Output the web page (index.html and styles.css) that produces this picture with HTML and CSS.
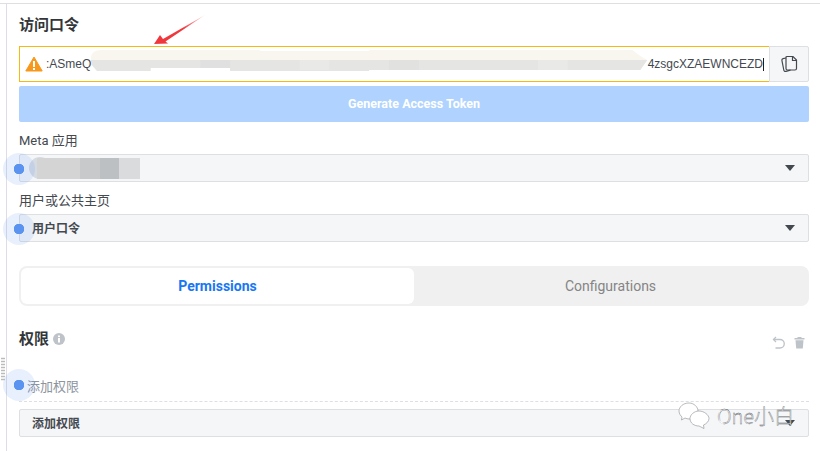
FILE: index.html
```html
<!DOCTYPE html>
<html lang="zh">
<head>
<meta charset="utf-8">
<title>访问口令</title>
<link rel="stylesheet" href="styles.css">
</head>
<body>
<div class="page">
  <div class="frame">
  <div class="panel">
    <h2 class="title">访问口令</h2>
    <div class="token">
      <div class="token-input">
        <svg class="warn" width="18" height="16" viewBox="0 0 18 16"><path d="M9 1 L17.200 15 H0.800 Z" fill="#f7981d" stroke="#f7981d" stroke-linejoin="round"/><rect x="8" y="5" width="2" height="6" fill="#fff"/><rect x="8" y="12" width="2" height="2" fill="#fff"/></svg>
        <span class="tok-start">:ASmeQ</span>
        <svg class="smear" width="560" height="21" viewBox="0 0 560 21" preserveAspectRatio="none">
          <path d="M0 6 Q2 0 10 0 H170 V1 H280 V0 H545 L553 6 L560 10 L553 20 H280 V20 H140 V18 H60 V21 H6 L0 14 Z" fill="#f9f6ef"/>
          <path d="M0 10 H560 L553 20 H280 V21 H140 V18 H60 V21 H6 L0 14 Z" fill="#e5e5e4"/>
          <rect x="110" y="10" width="30" height="8" fill="#e0e0e0"/>
          <rect x="210" y="10" width="30" height="10" fill="#e9e9e8"/>
          <rect x="300" y="10" width="30" height="10" fill="#e1e1e0"/>
          <rect x="450" y="10" width="30" height="10" fill="#e9e9e8"/>
        </svg>
        <span class="tok-end">4zsgcXZAEWNCEZD</span><span class="caret"></span>
      </div>
      <button class="copy"><svg width="18" height="18" viewBox="0 0 18 18" fill="none" stroke="#444950" stroke-width="1.2"><path d="M7 1.500 H13 L16.500 5 V13.500 Q16.500 15 15 15 H7.500 Q6 15 6 13.500 V2.500 Q6 1.500 7 1.500 Z"/><path d="M12.500 1.500 V5.500 H16.500"/><path d="M6 3 L3 3.600 Q1.600 4 1.900 5.400 L3.800 15 Q4.100 16.800 6 16.400 L10.500 15.200"/></svg></button>
    </div>
    <button class="generate">Generate Access Token</button>
    <label class="label">Meta 应用</label>
    <div class="select"><span class="avatar"></span><span class="blur"></span><span class="caret-down"></span></div>
    <label class="label">用户或公共主页</label>
    <div class="select"><span class="select-text">用户口令</span><span class="caret-down"></span></div>
    <div class="tabs">
      <div class="tab active">Permissions</div>
      <div class="tab">Configurations</div>
    </div>
    <div class="perm-head">
      <h2 class="title">权限</h2>
      <svg class="info" width="12" height="12" viewBox="0 0 12 12"><circle cx="6" cy="6" r="6" fill="#bec3c9"/><rect x="5" y="5" width="2" height="4.500" fill="#fff"/><rect x="5" y="2.500" width="2" height="1.600" fill="#fff"/></svg>
      <div class="actions">
        <svg width="13" height="13" viewBox="0 0 13 13" fill="none" stroke="#bec3c9" stroke-width="1.300"><path d="M1.500 3.500 H8 A4 4 0 0 1 8 12 H3.500"/><path d="M4 1 L1.500 3.500 L4 6"/></svg>
        <svg width="11" height="13" viewBox="0 0 11 13"><path d="M0.500 2 H3.500 V1 H7.500 V2 H10.500 V3.400 H0.500 Z M1.500 4.200 H9.500 L8.800 12.600 H2.200 Z" fill="#bec3c9"/></svg>
      </div>
    </div>
    <div class="add-input">添加权限</div>
    <div class="select add-select"><span class="select-text">添加权限</span><span class="caret-down"></span></div>
  </div>
  </div>
  <i class="hot hot-1"></i>
  <i class="hot hot-2"></i>
  <i class="hot hot-3"></i>
  <svg class="arrow" width="54" height="32" viewBox="0 0 54 32"><defs><linearGradient id="a" x1="0" y1="1" x2="1" y2="0"><stop offset="0" stop-color="#f0383c"/><stop offset=".55" stop-color="#f0383c"/><stop offset="1" stop-color="#f0383c" stop-opacity="0.150"/></linearGradient></defs><path d="M0 30 L6 21 L9 25 L51 1 L11.500 27.500 L14 29.500 Z" fill="url(#a)"/></svg>
  <div class="watermark">
    <svg width="32" height="27" viewBox="0 0 32 27" fill="#fff" stroke="#8a8d91" stroke-width=".6"><path d="M11 1 C5 1 1 5 1 9 C1 12 3 14 4 15 L3.500 18 L7 16 C8 16.500 10 17 11 17 C18 17 20 12 20 9 C20 5 16 1 11 1 Z"/><path d="M21 9 C16 9 12 13 12 16.500 C12 21 16 24 21 24 L26 26.500 L25.500 23 C28 22 31 19.500 31 16.500 C31 13 26 9 21 9 Z"/></svg>
    <span>One小白</span>
  </div>
  <div class="grip"></div>
</div>
</body>
</html>
```
FILE: styles.css
```css
* { box-sizing: border-box; }
html, body { margin: 0; padding: 0; background: #fff; }
body { font-family: Roboto, "Liberation Sans", "Noto Sans CJK SC", sans-serif; color: #444950; overflow: hidden; }
.page { position: relative; width: 820px; height: 451px; overflow: hidden; padding-top: 3px; }
.frame { height: 448px; border-top: 1px solid #dddfe2; padding-left: 6px; }
.panel { height: 447px; border-left: 1px solid #dcdde6; padding: 11px 11px 0 12px; }
.title { margin: 0; font-size: 15px; line-height: 18px; font-weight: 700; color: #333639; font-family: "Noto Sans CJK SC", sans-serif; }
.token { display: flex; height: 36px; margin-top: 13px; }
.token-input { flex: 1; min-width: 0; display: flex; align-items: center; border: 1px solid #f5b90f; border-right: 0; padding-left: 5px; font: 12px "Liberation Sans", sans-serif; color: #444950; overflow: hidden; }
.warn { flex: none; margin-right: 3px; }
.tok-start { flex: none; }
.smear { flex: 1; min-width: 0; height: 21px; align-self: flex-start; margin-top: 3px; }
.tok-end { flex: none; }
.caret { flex: none; width: 1px; height: 13px; background: #1c1e21; margin-right: 5px; }
.copy { flex: none; width: 40px; display: flex; align-items: center; justify-content: center; background: #f5f6f7; border: 1px solid #dddfe2; border-radius: 0 2px 2px 0; padding: 0; }
.generate { display: block; width: 100%; height: 36px; margin-top: 4px; border: 0; border-radius: 2px; background: #afd3fe; color: #fff; font: 700 12.500px/36px Roboto, "Liberation Sans", sans-serif; text-align: center; padding: 0; }
.label { display: block; margin-top: 9px; font-size: 13px; line-height: 20px; color: #444950; font-family: Roboto, "Noto Sans CJK SC", sans-serif; }
.select { position: relative; display: flex; align-items: center; height: 28px; margin-top: 3px; padding-left: 12px; background: #f5f6f7; border: 1px solid #dddfe2; border-radius: 2px; }
.select-text { font: 700 12px/16px "Noto Sans CJK SC", sans-serif; color: #444950; }
.avatar { width: 22px; height: 22px; margin-left: -3px; border-radius: 50%; background: #d5dae3; flex: none; }
.blur { width: 103px; height: 21px; margin-left: -14px; background: linear-gradient(90deg, #d4d4d4 0 42%, #c8c9cb 42% 61%, #bdc0c2 61% 80%, #dadbdc 80%); }
.caret-down { position: absolute; right: 13px; top: 10px; width: 0; height: 0; border-left: 5.500px solid transparent; border-right: 5.500px solid transparent; border-top: 6px solid #444950; }
.tabs { display: flex; height: 40px; margin-top: 24px; padding: 2px; background: #f0f0f0; border-radius: 8px; }
.tab { flex: 1; display: flex; align-items: center; justify-content: center; font-size: 14px; color: #858585; }
.tab.active { flex: 0 0 393px; background: #fff; border-radius: 6px; color: #1877f2; font-weight: 700; }
.perm-head { display: flex; align-items: center; height: 20px; margin-top: 22px; }
.info { margin: 2px 0 0 4px; }
.actions { display: flex; align-items: center; gap: 9px; margin-left: auto; margin-right: 4px; padding-top: 8px; }
.add-input { height: 28px; margin-top: 26px; border-bottom: 1px dashed #dddfe2; padding-left: 8px; font-size: 13px; line-height: 24px; color: #8d949e; font-family: "Noto Sans CJK SC", sans-serif; }
.add-select { margin-top: 7px; }
.hot { position: absolute; width: 32px; height: 32px; border-radius: 50%; background: radial-gradient(circle, #5b93f0 0 5px, rgba(91, 147, 240, .14) 5.500px); }
.hot-1 { left: 3px; top: 153px; }
.hot-2 { left: 3px; top: 213px; }
.hot-3 { left: 3px; top: 369px; }
.arrow { position: absolute; left: 154px; top: 14px; }
.watermark { position: absolute; left: 678px; top: 401px; display: flex; align-items: center; gap: 7px; color: #fff; font-size: 20px; font-weight: 300; -webkit-text-stroke: .35px #55595f; font-family: "Noto Sans CJK SC", sans-serif; }
.grip { position: absolute; left: 1px; top: 357px; width: 4px; height: 24px; background-image: radial-gradient(#bbb 0.600px, transparent 0.900px); background-size: 2px 3px; }
```
